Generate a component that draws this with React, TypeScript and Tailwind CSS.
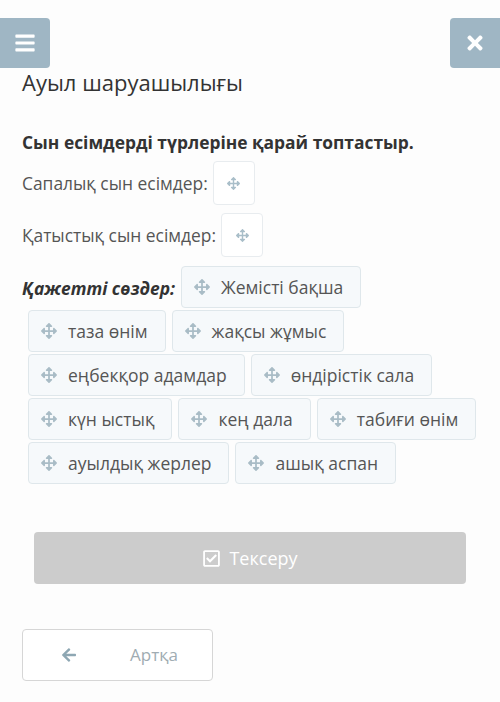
import React from 'react';
import { FaBars, FaTimes, FaArrowsAlt, FaRegCheckSquare, FaArrowLeft } from 'react-icons/fa';

const WORDS: string[][] = [
  ['таза өнім', 'жақсы жұмыс'],
  ['еңбекқор адамдар', 'өндірістік сала'],
  ['күн ыстық', 'кең дала', 'табиғи өнім'],
  ['ауылдық жерлер', 'ашық аспан'],
];

const Chip = ({ text }: { text: string }) => (
  <div className="ml-[6px] mb-[2px] flex h-[42px] items-center rounded-[4px] border border-[#dfe7eb] bg-[#f6f9fb] pl-3 pr-[17px] text-[17.5px] text-[#555]">
    <FaArrowsAlt className="mr-[11px] h-[16px] w-[16px] text-[#a9bcc6]" />
    <span>{text}</span>
  </div>
);

const DropBox = () => (
  <div className="ml-[5px] flex h-[44px] w-[42px] items-center justify-center rounded-[4px] border border-[#e8ecef] bg-white">
    <FaArrowsAlt className="h-[13px] w-[13px] text-[#a9bec9]" />
  </div>
);

export default function App() {
  return (
    <div className="min-h-[702px] bg-[#fdfdfd] pt-[18px] font-['Open_Sans',sans-serif] text-[#333]">
      {/* top bar */}
      <div className="flex justify-between">
        <button className="flex h-[50px] w-[50px] items-center justify-center rounded-r-[4px] bg-[#9fb6c4] text-white">
          <FaBars className="h-[22px] w-[22px]" />
        </button>
        <button className="flex h-[50px] w-[50px] items-center justify-center rounded-l-[4px] bg-[#9fb6c4] text-white">
          <FaTimes className="h-[22px] w-[22px]" />
        </button>
      </div>

      <div className="px-[22px]">
        <h1 className="text-[22px] leading-[28px] text-[#333]">Ауыл шаруашылығы</h1>

        <p className="mt-[34px] text-[17.4px] font-bold leading-[24px] text-[#333]">
          Сын есімдерді түрлеріне қарай топтастыр.
        </p>

        <div className="mt-[7px] flex items-center text-[17.4px] text-[#555]">
          <span>Сапалық сын есімдер:</span>
          <DropBox />
        </div>
        <div className="mt-[8px] flex items-center text-[17.4px] text-[#555]">
          <span>Қатыстық сын есімдер:</span>
          <DropBox />
        </div>

        <div className="mt-[9px]">
          <div className="flex items-center">
            <span className="text-[17.4px] font-bold italic text-[#333]">Қажетті сөздер:</span>
            <Chip text="Жемісті бақша" />
          </div>
          {WORDS.map((row, i) => (
            <div key={i} className="flex">
              {row.map((w) => (
                <Chip key={w} text={w} />
              ))}
            </div>
          ))}
        </div>
      </div>

      <div className="mx-[34px] mt-[46px]">
        <button className="flex h-[52px] w-full items-center justify-center gap-[8px] rounded-[4px] bg-[#cccccc] text-[18px] text-white">
          <FaRegCheckSquare className="h-[19px] w-[19px]" />
          <span>Тексеру</span>
        </button>
      </div>

      <div className="mt-[45px] px-[22px]">
        <button className="flex h-[52px] w-[191px] items-center rounded-[4px] border border-[#d6d6d6] bg-white pl-[38px] text-[17px] text-[#a0acb2]">
          <FaArrowLeft className="h-[16px] w-[16px] text-[#8ea7b3]" />
          <span className="ml-[53px]">Артқа</span>
        </button>
      </div>
    </div>
  );
}
